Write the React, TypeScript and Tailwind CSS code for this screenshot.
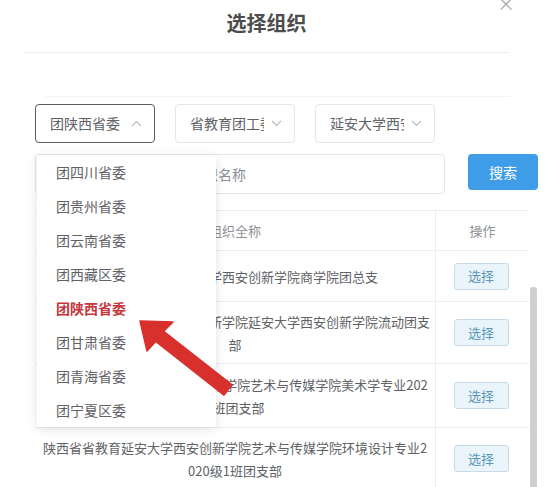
import React from "react";

const font = { fontFamily: '"Noto Sans CJK SC", "Noto Sans", sans-serif' };

function Chevron({ up }: { up?: boolean }) {
  return (
    <svg width="11" height="7" viewBox="0 0 11 7" className="shrink-0">
      <path
        d={up ? "M1 6 L5.5 1.5 L10 6" : "M1 1 L5.5 5.5 L10 1"}
        fill="none"
        stroke="#b8bcc4"
        strokeWidth="1.2"
      />
    </svg>
  );
}

function Select({ text, active, up }: { text: string; active?: boolean; up?: boolean }) {
  return (
    <div
      className={`flex h-[39px] w-[120px] items-center rounded-[4px] border pl-[14px] pr-[12px] ${
        active ? "border-[#5e5a58]" : "border-[#e4e6ea]"
      }`}
    >
      <span className="w-[76px] overflow-hidden whitespace-nowrap text-[14px] text-[#606266]">{text}</span>
      <span className="ml-[7px] flex">
        <Chevron up={up} />
      </span>
    </div>
  );
}

const rows: { lines: string[]; h: string }[] = [
  { lines: ["陕西省省教育延安大学西安创新学院商学院团总支"], h: "h-[51px]" },
  { lines: ["陕西省省教育延安大学西安创新学院延安大学西安创新学院流动团支", "部"], h: "h-[62px]" },
  { lines: ["陕西省省教育延安大学西安创新学院艺术与传媒学院美术学专业202", "1班团支部"], h: "h-[64px]" },
  { lines: ["陕西省省教育延安大学西安创新学院艺术与传媒学院环境设计专业2", "020级1班团支部"], h: "h-[62px]" },
];

const items = ["团四川省委", "团贵州省委", "团云南省委", "团西藏区委", "团陕西省委", "团甘肃省委", "团青海省委", "团宁夏区委"];

export default function App() {
  return (
    <div className="relative h-[487px] w-[555px] overflow-hidden bg-white" style={font}>
      {/* header */}
      <div className="ml-[23px] flex h-[53px] w-[487px] justify-center border-b border-[#f0f0f0] pt-[8px]">
        <span className="text-[20px] font-bold leading-[30px] text-[#4d4d4d]">选择组织</span>
      </div>
      <div className="ml-[45px] mr-[45px] h-[44px] border-b border-[#f4f4f4]" />

      {/* selects */}
      <div className="mt-[7px] flex gap-[20px] pl-[35px]">
        <Select text="团陕西省委" active up />
        <Select text="省教育团工委" />
        <Select text="延安大学西安创新学院" />
      </div>

      {/* search */}
      <div className="mt-[11px] flex items-start pl-[35px]">
        <div className="flex h-[40px] w-[410px] items-center rounded-[4px] border border-[#e4e6ea] pl-[112px]">
          <span className="whitespace-nowrap text-[14px] text-[#8a8d93]">请输入组织名称</span>
        </div>
        <button className="ml-[23px] h-[36px] w-[70px] rounded-[4px] bg-[#3f9de8] text-[14px] text-white">
          搜索
        </button>
      </div>

      {/* table */}
      <div className="ml-[35px] mt-[16px] w-[494px] border-t border-[#ebeef5]">
        <div className="flex h-[40px] border-b border-[#ebeef5] text-[13px] text-[#8f9196]">
          <div className="flex w-[401px] items-center justify-center border-r border-[#ebeef5]">组织全称</div>
          <div className="flex flex-1 items-center justify-center">操作</div>
        </div>
        {rows.map((r, i) => (
          <div key={i} className={`flex ${r.h} border-b border-[#ebeef5]`}>
            <div className="flex w-[401px] flex-col items-center justify-center border-r border-[#ebeef5] text-[13px] leading-[23px] text-[#606266]">
              {r.lines.map((l, j) => (
                <span key={j} className="whitespace-nowrap">
                  {l}
                </span>
              ))}
            </div>
            <div className="flex flex-1 items-center justify-center pr-[3px]">
              <button className="h-[27px] w-[55px] rounded-[3px] border border-[#c9dbe6] bg-[#eaf5fb] text-[13px] text-[#5b97b8]">
                选择
              </button>
            </div>
          </div>
        ))}
      </div>

      {/* close */}
      <div className="absolute left-[497px] top-[-6px] text-[18px] leading-none text-[#a9a9a9]">×</div>

      {/* scrollbar */}
      <div className="absolute left-[530px] top-[287px] h-[220px] w-[7px] rounded-[3px] bg-[#cfcfcf]" />

      {/* dropdown */}
      <div className="absolute left-[37px] top-[155px] w-[179px] bg-white shadow-[0_2px_10px_rgba(0,0,0,0.12)]">
        {items.map((it) => (
          <div
            key={it}
            className={`flex h-[34px] items-center pl-[19px] text-[14px] ${
              it === "团陕西省委" ? "font-bold text-[#c6363c]" : "text-[#5f6166]"
            }`}
          >
            {it}
          </div>
        ))}
      </div>

      {/* red arrow */}
      <svg className="absolute left-0 top-0" width="555" height="487" viewBox="0 0 555 487">
        <polygon
          points="140,321 173,322 163.7,331.3 232,384.9 224,395.1 155.7,341.5 147,351"
          fill="#d8302c"
          stroke="#d8302c"
          strokeWidth="1.5"
          strokeLinejoin="round"
        />
      </svg>
    </div>
  );
}
